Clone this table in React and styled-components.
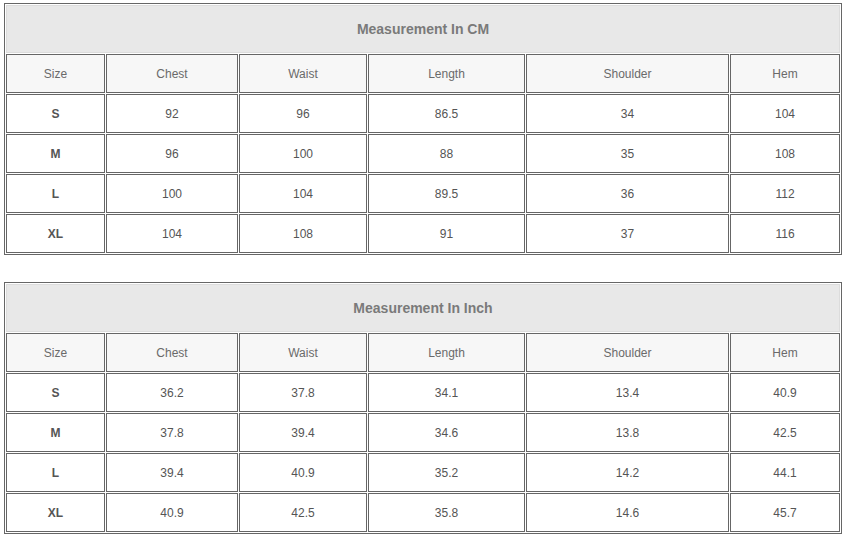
import React from "react";
import styled, { createGlobalStyle } from "styled-components";

const Global = createGlobalStyle`
  html, body { margin: 0; padding: 0; background: #fff; }
  body { font-family: "Liberation Sans", Arial, sans-serif; }
`;

const Page = styled.div`
  display: flex;
  flex-direction: column;
  gap: 27px;
  padding: 3px 0 0 4px;
`;

const Table = styled.div`
  box-sizing: border-box;
  width: 838px;
  border: 1px solid #666;
  padding: 1px;
  display: grid;
  grid-template-columns: 99px 132px 128px 157px 203px 110px;
  gap: 1px;
  background: #fff;
`;

const Title = styled.div`
  grid-column: 1 / -1;
  box-sizing: border-box;
  height: 48px;
  border: 1px solid #dcdcdc;
  background: #e8e8e8;
  display: flex;
  align-items: center;
  justify-content: center;
  font-size: 14px;
  font-weight: bold;
  color: #7a7a7a;
`;

const Cell = styled.div`
  box-sizing: border-box;
  height: 39px;
  border: 1px solid #666;
  background: ${(p) => (p.$head ? "#f7f7f7" : "#fff")};
  display: flex;
  align-items: center;
  justify-content: center;
  font-size: 12px;
  font-weight: ${(p) => (p.$bold ? "bold" : "normal")};
  color: ${(p) => (p.$head ? "#6a6a6a" : "#555")};
`;

const headers = ["Size", "Chest", "Waist", "Length", "Shoulder", "Hem"];

const cm = [
  ["S", "92", "96", "86.5", "34", "104"],
  ["M", "96", "100", "88", "35", "108"],
  ["L", "100", "104", "89.5", "36", "112"],
  ["XL", "104", "108", "91", "37", "116"],
];

const inch = [
  ["S", "36.2", "37.8", "34.1", "13.4", "40.9"],
  ["M", "37.8", "39.4", "34.6", "13.8", "42.5"],
  ["L", "39.4", "40.9", "35.2", "14.2", "44.1"],
  ["XL", "40.9", "42.5", "35.8", "14.6", "45.7"],
];

function SizeTable({ title, rows }) {
  return (
    <Table>
      <Title>{title}</Title>
      {headers.map((h) => (
        <Cell key={h} $head>
          {h}
        </Cell>
      ))}
      {rows.map((r) =>
        r.map((v, i) => (
          <Cell key={r[0] + i} $bold={i === 0}>
            {v}
          </Cell>
        ))
      )}
    </Table>
  );
}

export default function App() {
  return (
    <>
      <Global />
      <Page>
        <SizeTable title="Measurement In CM" rows={cm} />
        <SizeTable title="Measurement In Inch" rows={inch} />
      </Page>
    </>
  );
}
